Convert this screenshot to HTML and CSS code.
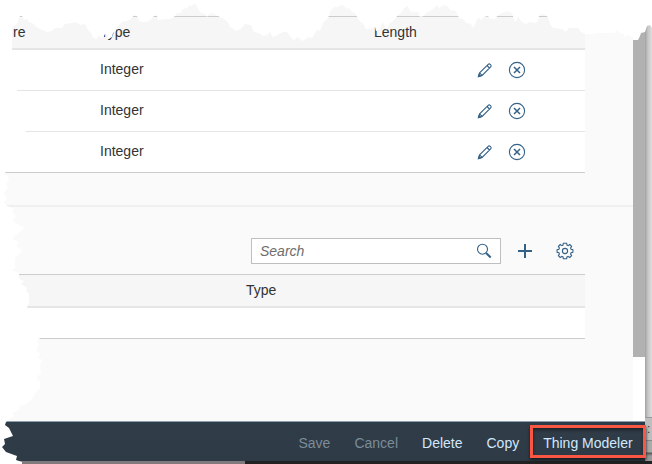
FILE: index.html
```html
<!DOCTYPE html>
<html lang="en">
<head>
<meta charset="utf-8">
<title>Thing Modeler</title>
<link rel="stylesheet" href="styles.css">
</head>
<body>
<svg class="defs" width="0" height="0">
  <symbol id="pencil" viewBox="0 0 16 16"><path d="M1.6 14.4 2.6 10.9 11.2 2.3 Q12.2 1.3 13.2 2.3 L13.7 2.8 Q14.7 3.8 13.7 4.8 L5.1 13.4Z M2.6 10.9 5.1 13.4 M10 3.5 12.5 6"/><path class="solid" d="M1.4 14.6 2 12.6 3.4 14Z"/></symbol>
  <symbol id="decline" viewBox="0 0 18 18"><circle cx="9" cy="9" r="7.6"/><path class="bold" d="M6 6 12 12M12 6 6 12"/></symbol>
</svg>
<div class="app">
  <main class="content">
    <div class="page">
      <section class="properties">
        <div class="table">
          <div class="row head"><span class="name">re</span><span class="type">Type</span><span class="length">Length</span></div>
          <div class="row"><span class="type">Integer</span><svg class="icon edit"><use href="#pencil"/></svg><svg class="icon remove"><use href="#decline"/></svg></div>
          <div class="row"><span class="type">Integer</span><svg class="icon edit"><use href="#pencil"/></svg><svg class="icon remove"><use href="#decline"/></svg></div>
          <div class="row last"><span class="type">Integer</span><svg class="icon edit"><use href="#pencil"/></svg><svg class="icon remove"><use href="#decline"/></svg></div>
        </div>
      </section>
      <section class="events">
        <div class="toolbar">
          <div class="search"><span>Search</span>
            <svg class="icon magnifier" viewBox="0 0 16 16"><circle cx="6.5" cy="6.2" r="5"/><path class="handle" d="M10 10 14.7 14.4"/></svg>
          </div>
          <svg class="icon plus" viewBox="0 0 14 14"><path d="M7 0V14M0 7H14"/></svg>
          <svg class="icon gear" viewBox="0 0 18 18"><path d="M7.4 1.2h3.2l.4 1.9 1.1.5 1.7-1.1 1.8 1.9-1 1.7.5 1.1 1.8.4v2.8l-1.8.4-.5 1.1 1 1.7-1.8 1.9-1.7-1.1-1.1.5-.4 1.9H7.4L7 14.9l-1.1-.5-1.7 1.1-1.8-1.9 1-1.7-.5-1.1-1.8-.4V7.6l1.8-.4.5-1.1-1-1.7 1.8-1.9 1.7 1.1L7 3.1Z"/><circle cx="9" cy="9" r="2.6"/></svg>
        </div>
        <div class="table second">
          <div class="row head"><span>Type</span></div>
          <div class="row blank"></div>
        </div>
      </section>
    </div>
    <div class="scroll"><div class="thumb"></div></div>
    <div class="behind"><i class="shade"></i><i class="strip">:</i><i class="base"></i></div>
  </main>
  <footer class="footer">
    <span class="off save">Save</span><span class="off cancel">Cancel</span><span class="delete">Delete</span><span class="copy">Copy</span><span class="modeler">Thing Modeler</span>
    <i class="highlight"></i>
  </footer>
  <div class="under"><i></i></div>
  <svg class="torn" viewBox="0 0 652 464">
    <path d="M0 0H652V28L650 25 647 26 645 32 641 33 640 36 638 40H633V37L628 35 625 38 624 34 620 33 617 30 615 33H600L592 34H585L581 32 578 28H569L566 32 562 29 553 28 550 24 549 20 547 16 543 14 539 15 538 22 535 23 530 22 526 24 522 22 518 17 516 22 514 20 512 13 508 11 502 13 498 15 495 19H490L488 16 484 17 481 20 478 18 476 22 473 28 471 24 466 23 464 20 459 18 456 11 450 10 448 6 444 5 439 8 437 5 433 9 430 11 427 12 424 16 420 17 418 12H414L410 11 408 6 404 8 402 12 397 16 394 20 389 24 386 30 383 22 381 26 379 30 376 31 375 27 370 29H366L363 23 360 22 355 13 352 12 349 8 347 9 344 6 341 5 338 7H334L330 12 328 18 323 23 320 31 317 30 312 38 308 37 303 41 297 37 294 41 291 37 287 32H283L279 34 273 37 270 32 267 35 263 36 259 33 254 32 251 25 245 24 241 29 236 31 230 27 228 22 224 19 220 17 216 15 212 13 209 14 207 17 205 14 201 13 198 9 196 4H194L192 6 190 5 187 8 183 9 180 13H177L174 17 170 19H165L158 20 157 16 155 15 150 20 147 22 143 22 139 21 137 16 134 15 131 19 127 21 122 22 118 26 116 31 113 33 112 37 108 39 107 34 105 34 103 38 99 36 96 39 93 37 91 33 88 30 85 24 80 25 76 22 72 23 65 24 62 28H55L52 31 47 32 40 29 36 27 34 24 29 22 27 19 24 20 22 16H20L17 24 12 27V51L17 90 26 131 17 170 6 172 3 174 8 176 9 180 6 184 8 188 4 193 7 199 4 202 7 206 14 209 12 212 16 216 12 221 18 224 24 228 20 232 14 236 13 239 18 242 17 247 22 250 19 254 15 258V268L11 270 19 273V279L24 281 21 284 27 288 26 291 29 294V302L27 308 41 337 37 341 39 345 36 350 40 354 38 357 42 360 40 365 41 373 36 378 40 382V388L36 392 34 396 30 401 24 405 16 407 21 408 13 413 14 416 8 420 6 422 5 425 9 428 11 432 13 436 4 439 5 444 2 447 6 452 17 456 16 460 22 462V464H0Z"/>
  </svg>
</div>
</body>
</html>
```
FILE: styles.css
```css
* { box-sizing: border-box; }
body { margin: 0; font: 14px/18px "Liberation Sans", Arial, sans-serif; color: #333; background: #fff; }
.defs { position: absolute; }
.app { position: relative; width: 652px; height: 464px; overflow: hidden; display: flex; flex-direction: column; }
.content { height: 421px; display: flex; }
.page { width: 633px; background: #fafafa; }
.properties { height: 207px; padding-top: 16px; border-bottom: 2px solid #f0f0f0; background: linear-gradient(#f7f7f7 16px, #fafafa 16px); }
.table { width: 585px; border-top: 1px solid #ccc; }
.row { height: 41px; display: flex; align-items: center; background: #fff; border-bottom: 1px solid #e5e5e5; }
.row span { padding-bottom: 2px; }
.row.head { height: 33px; background: #f6f6f6; border-bottom: 2px solid #e5e5e5; }
.row.last { border-bottom-color: #ccc; }
.name { width: 100px; padding-left: 13px; }
.row .type { width: 274px; margin-left: 100px; }
.head .name + .type { margin-left: 0; }
.icon { fill: none; stroke: #346187; stroke-width: 1.1; flex: none; overflow: visible; }
.solid { fill: #346187; }
.bold { stroke-width: 1.5; }
.edit { width: 16px; height: 16px; margin-left: 103px; }
.remove { width: 18px; height: 18px; margin-left: 15px; }
.events { padding-top: 31px; }
.toolbar { display: flex; align-items: center; padding-left: 251px; height: 26px; }
.search { width: 250px; height: 26px; padding: 0 8px; border: 1px solid #bfbfbf; background: #fff; display: flex; align-items: center; justify-content: space-between; font-style: italic; color: #6e6e6e; }
.magnifier { width: 16px; height: 16px; }
.handle { stroke-width: 2; }
.plus { width: 14px; height: 14px; margin-left: 17px; stroke-width: 2; }
.gear { width: 18px; height: 18px; margin-left: 24px; }
.second { margin-top: 10px; }
.second .head { padding-left: 246px; }
.row.blank { height: 31px; border-bottom-color: #ccc; }
.scroll { width: 12px; background: #fff; }
.thumb { height: 357px; background: #b1b1b1; }
.behind { width: 7px; height: 464px; flex: none; display: flex; flex-direction: column; }
.behind i { font-style: normal; }
.shade { height: 417px; background: linear-gradient(90deg, #a2a2a2, #c7c7c7 3px, #dedede); }
.strip { height: 23px; background: #bebebe; border-top: 1px solid #999; font-size: 12px; line-height: 23px; padding-left: 2px; }
.base { flex: 1; border-top: 1px solid #888; background: linear-gradient(#aaa 11px, #555 12px, #999 15px); }
.footer { position: relative; width: 645px; height: 40px; display: flex; align-items: center; border-top: 1px solid #8d9fac; background: linear-gradient(#2c3d4c, #303c47 3px, #2e3a45); color: #d1e8ff; padding-top: 3px; padding-left: 298.5px; }
.off { color: #7b8c9b; }
.cancel { margin-left: 24px; }
.delete { margin-left: 24px; }
.copy { margin-left: 24px; }
.modeler { margin-left: 24px; white-space: nowrap; }
.highlight { position: absolute; left: 530px; top: 3px; width: 116px; height: 33px; border: 3px solid #fa5644; box-shadow: 0 2px 3px #15191d, inset 0 2px 3px #1b2228; }
.under { height: 3px; background: #222; }
.under i { display: block; width: 245px; height: 3px; background: #817a7c; }
.torn { position: absolute; inset: 0; width: 652px; height: 464px; fill: #fff; }
```
